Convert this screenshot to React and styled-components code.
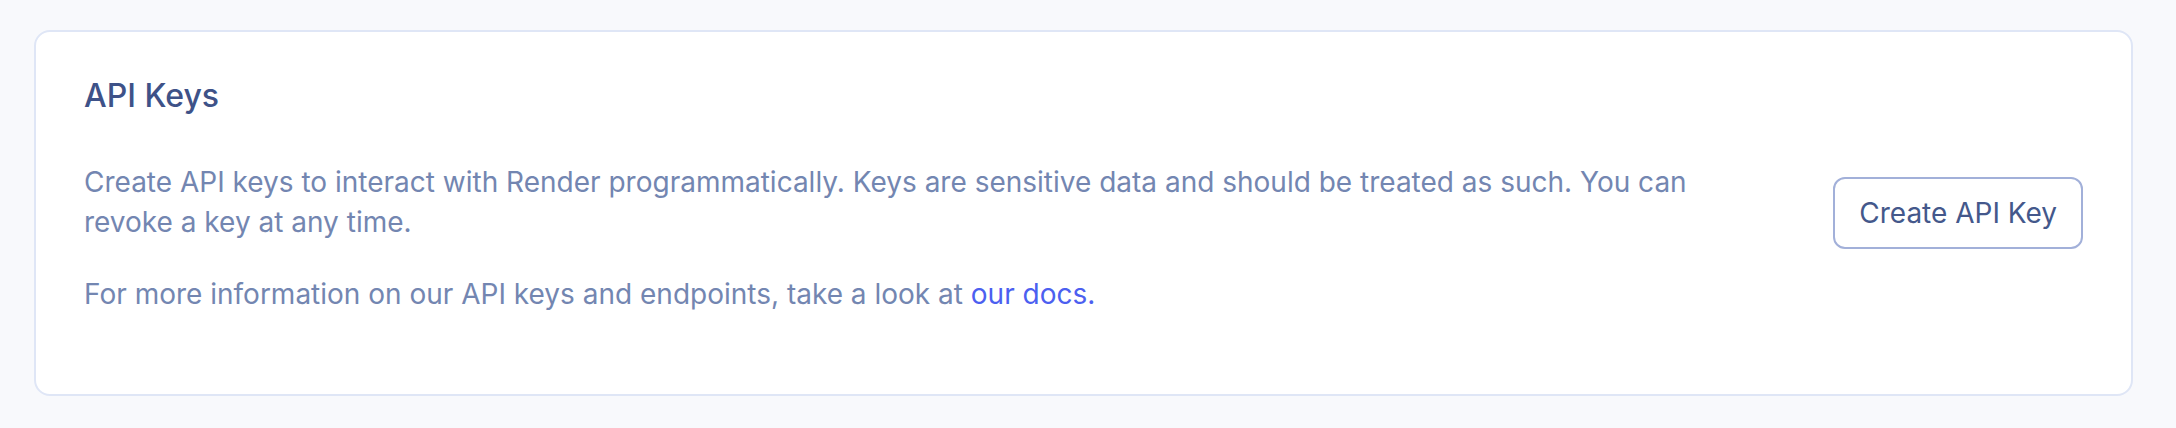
import React from "react";
import styled, { createGlobalStyle } from "styled-components";

const Global = createGlobalStyle`
  html, body { margin: 0; padding: 0; background: #f8f9fc; }
  body { font-family: Inter, "Noto Sans", "Liberation Sans", sans-serif; -webkit-font-smoothing: antialiased; }
`;

const Page = styled.div`
  padding: 30px 43px 32px 34px;
`;

const Card = styled.section`
  background: #ffffff;
  border: 2px solid #dfe6f6;
  border-radius: 16px;
  padding: 48px;
  display: flex;
  align-items: center;
  gap: 64px;
`;

const Body = styled.div`
  flex: 1;
  min-width: 0;
`;

const Title = styled.h2`
  margin: 0 0 50px;
  font-size: 32px;
  line-height: 32px;
  font-weight: 500;
  color: #3e5288;
`;

const Text = styled.p`
  margin: 0 0 32px;
  font-size: 28px;
  line-height: 40px;
  color: #7386b1;
`;

const Link = styled.a`
  color: #4c5ff0;
  text-decoration: none;
`;

const Button = styled.button`
  flex: none;
  font-family: inherit;
  font-size: 28px;
  line-height: 40px;
  color: #44588b;
  background: #ffffff;
  border: 2px solid #a2b0d9;
  border-radius: 12px;
  padding: 14px 24px;
  cursor: pointer;
`;

export default function App() {
  return (
    <>
      <Global />
      <Page>
        <Card>
          <Body>
            <Title>API Keys</Title>
            <Text>
              Create API keys to interact with Render programmatically. Keys are sensitive data and should be
              treated as such. You can revoke a key at any time.
            </Text>
            <Text>
              For more information on our API keys and endpoints, take a look at <Link href="#">our docs.</Link>
            </Text>
          </Body>
          <Button>Create API Key</Button>
        </Card>
      </Page>
    </>
  );
}
